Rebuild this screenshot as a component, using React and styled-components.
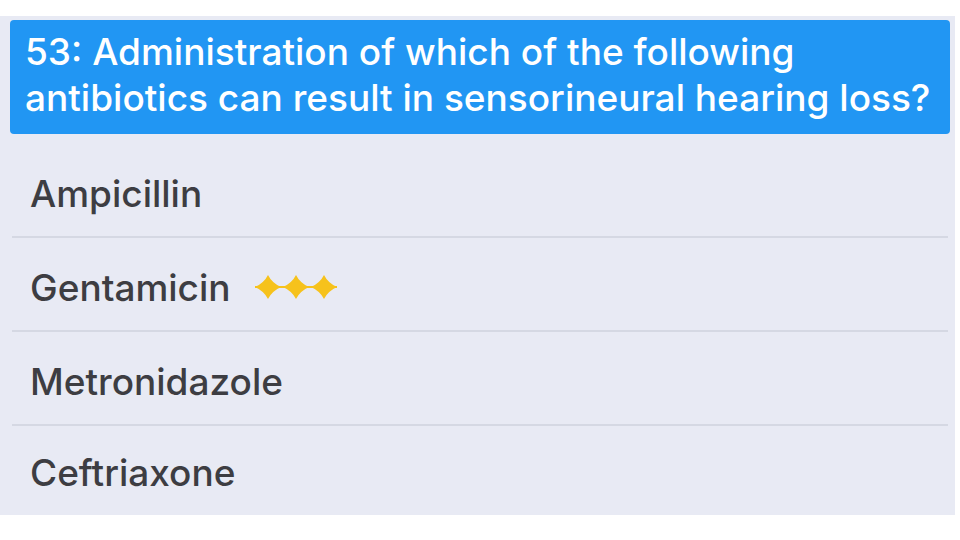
import React from 'react';
import styled, { createGlobalStyle } from 'styled-components';

const GlobalStyle = createGlobalStyle`
  html, body {
    margin: 0;
    padding: 0;
    background: #ffffff;
  }
  body {
    font-family: Inter, "Liberation Sans", Arial, sans-serif;
    -webkit-font-smoothing: antialiased;
  }
`;

const Panel = styled.div`
  margin-top: 16px;
  width: 955px;
  box-sizing: border-box;
  padding: 4px 5px 2px 10px;
  background: #e8eaf4;
`;

const Question = styled.div`
  background: #2196f3;
  color: #ffffff;
  border-radius: 4px;
  padding: 9px 8px 13px 15px;
  font-size: 37px;
  font-weight: 500;
  line-height: 46px;
`;

const Answers = styled.ul`
  list-style: none;
  margin: 10px 0 0;
  padding: 0;
`;

const Answer = styled.li`
  display: flex;
  align-items: center;
  gap: 22px;
  box-sizing: border-box;
  height: ${(p) => (p.$last ? '87px' : '94px')};
  margin: 0 2px;
  padding: 6px 0 0 18px;
  border-bottom: ${(p) => (p.$last ? 'none' : '2px solid #d5d8e3')};
  color: #3d3d42;
  font-size: 37px;
  font-weight: 500;
`;

// three gold four-point sparkles marking the correct choice
const Sparkles = () => (
  <svg width="86" height="28" viewBox="0 0 86 28">
    <line x1="2" y1="14" x2="84" y2="14" stroke="#f6c21c" strokeWidth="2" />
    {[15, 43, 71].map((cx) => (
      <path
        key={cx}
        d={`M${cx} 2 Q${cx + 4} 10 ${cx + 13} 14 Q${cx + 4} 18 ${cx} 26 Q${cx - 4} 18 ${cx - 13} 14 Q${cx - 4} 10 ${cx} 2 Z`}
        fill="#f6c21c"
      />
    ))}
  </svg>
);

const choices = [
  { text: 'Ampicillin' },
  { text: 'Gentamicin', correct: true },
  { text: 'Metronidazole' },
  { text: 'Ceftriaxone' },
];

export default function App() {
  return (
    <>
      <GlobalStyle />
      <Panel>
        <Question>
          53: Administration of which of the following antibiotics can result in sensorineural hearing loss?
        </Question>
        <Answers>
          {choices.map((c, i) => (
            <Answer key={c.text} $last={i === choices.length - 1}>
              <span>{c.text}</span>
              {c.correct && <Sparkles />}
            </Answer>
          ))}
        </Answers>
      </Panel>
    </>
  );
}
